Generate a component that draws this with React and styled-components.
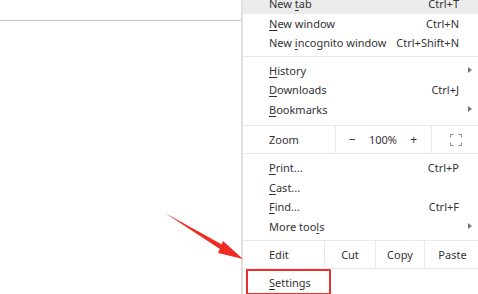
import React from 'react';
import styled, { createGlobalStyle } from 'styled-components';

const GlobalStyle = createGlobalStyle`
    html, body {
        margin: 0;
        padding: 0;
        background: #ffffff;
    }
    body {
        font-family: "Noto Sans", "Liberation Sans", sans-serif;
    }
`;

const Page = styled.div`
    position: relative;
    width: 478px;
    height: 294px;
    overflow: hidden;
    display: flex;
    background: #fff;
`;

const Content = styled.div`
    width: 241px;
    flex-shrink: 0;
    .toolbar {
        height: 20px;
        border-bottom: 1px solid #c6c6c6;
    }
`;

const Menu = styled.div`
    width: 237px;
    flex-shrink: 0;
    border-left: 2px solid #e0e0e0;
    background: #fff;
    color: #333;
    font-size: 11px;
    margin-top: -6px;
`;

const Item = styled.div`
    position: relative;
    height: 19.5px;
    display: flex;
    align-items: center;
    padding: 0 21px 0 26px;
    background: ${({ $active }) => ($active ? '#ececec' : 'transparent')};
    .label {
        flex: 1;
        white-space: nowrap;
    }
    .keys {
        white-space: nowrap;
    }
    u {
        text-decoration-thickness: 1px;
        text-underline-offset: 2px;
    }
`;

const Arrow = styled.span`
    position: absolute;
    right: 8px;
    top: 50%;
    margin-top: -3px;
    width: 0;
    height: 0;
    border-top: 3px solid transparent;
    border-bottom: 3px solid transparent;
    border-left: 4px solid #777;
`;

const Separator = styled.div`
    height: 1px;
    background: #e8e8e8;
    margin: ${({ $m }) => $m || '4px 0'};
`;

const SplitRow = styled.div`
    display: grid;
    grid-template-columns: ${({ $cols }) => $cols};
    height: ${({ $h }) => $h}px;
    align-items: stretch;
`;

const Cell = styled.div`
    display: flex;
    align-items: center;
    justify-content: ${({ $left }) => ($left ? 'flex-start' : 'center')};
    padding-left: ${({ $left }) => ($left ? '26px' : '0')};
    border-left: ${({ $first }) => ($first ? 'none' : '1px solid #e8e8e8')};
    white-space: nowrap;
`;

const ZoomCtrl = styled.div`
    flex: 1;
    display: flex;
    align-items: center;
    justify-content: space-between;
    padding: 0 14px 0 13px;
    span.sign {
        font-size: 12px;
    }
`;

const Highlight = styled.div`
    position: absolute;
    left: 3px;
    top: -4px;
    width: 81px;
    height: 22px;
    border: 2px solid #e8302c;
    border-radius: 1px;
    pointer-events: none;
`;

const Pointer = styled.svg`
    position: absolute;
    left: 160px;
    top: 205px;
`;

const FullscreenIcon = () => (
    <svg width="12" height="12" viewBox="0 0 12 12" fill="none" stroke="#888" strokeWidth="1">
        <path d="M0.5 3.5V0.5H3.5M8.5 0.5H11.5V3.5M11.5 8.5V11.5H8.5M3.5 11.5H0.5V8.5" />
    </svg>
);

const items1 = [
    { label: <>New <u>t</u>ab</>, keys: 'Ctrl+T', active: true },
    { label: <><u>N</u>ew window</>, keys: 'Ctrl+N' },
    { label: <>New <u>i</u>ncognito window</>, keys: 'Ctrl+Shift+N' },
];

const items2 = [
    { label: <><u>H</u>istory</>, sub: true },
    { label: <><u>D</u>ownloads</>, keys: 'Ctrl+J' },
    { label: <><u>B</u>ookmarks</>, sub: true },
];

const items3 = [
    { label: <><u>P</u>rint...</>, keys: 'Ctrl+P' },
    { label: <><u>C</u>ast...</> },
    { label: <><u>F</u>ind...</>, keys: 'Ctrl+F' },
    { label: <>More too<u>l</u>s</>, sub: true },
];

const renderItems = (list) =>
    list.map((it, i) => (
        <Item key={i} $active={it.active}>
            <span className="label">{it.label}</span>
            {it.keys && <span className="keys">{it.keys}</span>}
            {it.sub && <Arrow />}
        </Item>
    ));

const App = () => {
    return (
        <Page>
            <GlobalStyle />
            <Content>
                <div className="toolbar" />
            </Content>
            <Menu>
                {renderItems(items1)}
                <Separator $m="3px 0 4px" />
                {renderItems(items2)}
                <Separator $m="6px 0 0" />
                <SplitRow $cols="92px 96px 1fr" $h={27}>
                    <Cell $first $left>Zoom</Cell>
                    <Cell>
                        <ZoomCtrl>
                            <span className="sign">−</span>
                            <span>100%</span>
                            <span className="sign">+</span>
                        </ZoomCtrl>
                    </Cell>
                    <Cell><FullscreenIcon /></Cell>
                </SplitRow>
                <Separator $m="0 0 4px" />
                {renderItems(items3)}
                <Separator $m="4px 0 0" />
                <SplitRow $cols="81px 51px 49px 1fr" $h={27}>
                    <Cell $first $left>Edit</Cell>
                    <Cell>Cut</Cell>
                    <Cell>Copy</Cell>
                    <Cell>Paste</Cell>
                </SplitRow>
                <Separator $m="0 0 4px" />
                <Item>
                    <span className="label"><u>S</u>ettings</span>
                    <Highlight />
                </Item>
            </Menu>
            <Pointer width="90" height="60" viewBox="0 0 90 60">
                <path d="M5 8 L70 44 L66 48 Z" fill="#ef2b24" />
                <path d="M83 54 L63 36 L58 48 Z" fill="#ef2b24" />
            </Pointer>
        </Page>
    );
};

export default App;
